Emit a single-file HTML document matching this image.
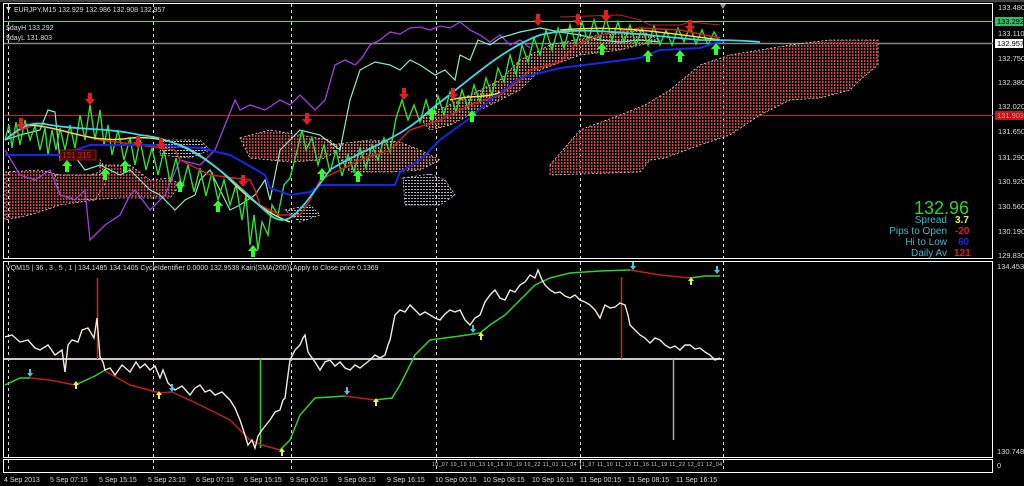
<!DOCTYPE html>
<html><head><meta charset="utf-8"><style>
html,body{margin:0;padding:0;background:#000;}
svg{display:block;font-family:"Liberation Sans",sans-serif;}
</style></head><body>
<svg width="1024" height="486" viewBox="0 0 1024 486" xmlns="http://www.w3.org/2000/svg">
<defs>
<pattern id="rd" width="3" height="3" patternUnits="userSpaceOnUse"><rect x="0" y="0" width="1" height="2" fill="#d84848"/><rect x="1" y="0" width="1" height="2" fill="#702020"/></pattern>
<pattern id="od" width="3" height="3" patternUnits="userSpaceOnUse"><rect x="0" y="0" width="1" height="2" fill="#e08060"/><rect x="1" y="0" width="1" height="2" fill="#703828"/></pattern>
<pattern id="wd" width="3" height="3" patternUnits="userSpaceOnUse"><rect x="0" y="0" width="2" height="1" fill="#b8b0c0"/></pattern>
</defs>
<rect width="1024" height="486" fill="#000"/>
<rect x="3.5" y="3.5" width="989" height="255" fill="none" stroke="#fff"/>
<rect x="3.5" y="261.5" width="989" height="196" fill="none" stroke="#fff"/>
<rect x="3.5" y="459.5" width="989" height="13" fill="none" stroke="#fff"/>
<line x1="0" y1="1" x2="1024" y2="1" stroke="#888"/>
<g stroke="#ddd" stroke-dasharray="3,3" stroke-width="1">
<line x1="8.5" y1="4" x2="8.5" y2="472"/><line x1="153.5" y1="4" x2="153.5" y2="472"/><line x1="291.5" y1="4" x2="291.5" y2="472"/><line x1="436.5" y1="4" x2="436.5" y2="472"/><line x1="580.5" y1="4" x2="580.5" y2="472"/><line x1="723.5" y1="4" x2="723.5" y2="472"/>
</g>
<polygon points="720,4 726,4 723,9" fill="#999"/>
<line x1="4" y1="21.5" x2="993" y2="21.5" stroke="#5fcf7f"/>
<line x1="4" y1="43.5" x2="993" y2="43.5" stroke="#888" stroke-width="1.5"/>
<line x1="4" y1="115.5" x2="993" y2="115.5" stroke="#d02020"/>
<g stroke="#ddd" stroke-dasharray="2,2" stroke-width="0.8">
<polygon points="550,165 580,130 620,115 645,105 670,90 700,65 730,55 760,50 790,45 830,40 878,40 878,65 860,80 850,90 820,98 790,100 760,115 730,135 700,145 665,158 650,160 640,172 550,175" fill="url(#rd)"/>
<polygon points="5,172 40,170 60,175 90,175 100,172 100,160 110,175 95,200 60,205 30,215 5,220" fill="url(#rd)"/>
<polygon points="55,175 100,175 100,165 130,165 150,180 170,178 180,185 170,198 120,198 80,200 60,195" fill="url(#rd)"/>
<polygon points="240,138 270,130 300,135 330,140 340,150 320,160 290,162 250,158" fill="url(#rd)"/>
<polygon points="330,145 370,140 400,142 420,150 440,160 420,170 390,172 350,172" fill="url(#od)"/>
<polygon points="420,118 460,100 500,80 520,60 550,45 600,35 640,30 660,40 620,50 580,55 540,70 520,90 480,110 450,125 430,130" fill="url(#od)"/>
<polygon points="403,178 430,174 445,180 455,195 440,205 405,205" fill="url(#wd)"/>
<polygon points="160,140 200,140 210,150 190,158 160,155" fill="url(#wd)"/>
<polygon points="285,210 310,205 320,215 300,222" fill="url(#wd)"/>
</g>
<polyline fill="none" stroke="#a040e0" stroke-width="1.3" points="5,150 20,175 35,180 50,170 60,195 75,200 85,190 90,240 95,235 105,225 120,215 130,195 135,190 150,210 165,195 180,160 200,165 215,150 235,100 240,110 250,105 265,110 280,100 290,105 300,95 315,110 325,100 335,65 345,60 355,65 362,58 370,45 380,40 390,32 400,34 410,28 420,27 430,30 440,26 450,28 460,22 470,30 480,35 490,42 500,35 510,45 520,40 530,48"/>
<polyline fill="none" stroke="#90e8c8" stroke-width="1.2" points="5,140 20,135 40,130 48,110 55,112 60,160 70,150 85,170 100,165 120,175 130,170 140,180 150,190 160,195 175,210 185,200 195,195 200,180 210,170 220,190 230,210 240,205 255,195 265,180 270,200 280,150 290,140 300,130 320,135 340,150 350,100 360,70 375,62 390,65 400,70 410,60 420,65 435,75 445,70 455,80 460,55 470,60 478,40 490,45 500,38 520,32 540,28 560,32 580,35 600,40 620,42 640,40 660,42"/>
<polyline fill="none" stroke="#30e030" stroke-width="1.4" points="5,140 9,125 12,148 16,122 20,145 25,120 30,140 35,126 40,150 45,128 48,155 52,130 56,150 60,128 65,150 70,125 75,148 80,115 85,140 90,105 95,140 100,110 104,145 108,125 112,155 118,130 124,160 130,138 135,165 140,140 146,170 152,148 158,175 164,150 170,182 176,158 182,188 188,165 194,192 200,168 206,196 212,172 218,200 224,180 230,205 236,185 242,220 246,195 250,245 254,215 258,250 262,222 268,235 272,205 278,215 284,185 290,178 296,155 302,130 306,150 312,138 318,165 324,145 330,172 336,150 342,176 348,155 354,172 360,148 366,168 372,145 378,160 384,138 390,152 396,118 402,100 408,120 414,105 420,122 426,100 432,120 438,96 444,115 450,92 456,112 462,90 468,108 474,85 480,102 486,78 492,95 498,68 504,82 510,55 516,75 522,45 528,62 534,38 540,55 546,30 552,50 558,28 564,48 570,25 576,45 582,22 588,42 594,20 600,40 606,18 612,40 618,22 624,42 630,25 636,45 642,28 648,45 654,26 660,45 666,30 672,45 678,28 684,42 690,26 696,44 702,30 708,45 714,32 720,42"/>
<polyline fill="none" stroke="#d02020" stroke-width="1.5" points="5,140 20,130 35,125 60,130 100,140 140,145 175,150 180,160 210,175 250,180 255,190 260,205 280,215 300,215 310,200 320,180 340,170 360,160 390,150 400,140 410,130 440,120 470,105 500,95 520,80 530,70 560,62 575,45 600,35 640,28 680,30 720,38"/>
<polyline fill="none" stroke="#c02020" stroke-width="1" points="560,17 620,15 640,20 650,25 680,25 690,22 720,25"/>
<polyline fill="none" stroke="#1428e8" stroke-width="2" points="5,155 60,155 90,145 150,145 200,148 230,155 248,165 265,175 270,188 290,195 310,192 320,185 395,185 400,172 420,160 440,140 470,118 490,100 520,78 560,68 600,63 640,58 660,50 700,48 725,40"/>
<path fill="none" stroke="#f0e040" stroke-width="1.5" d="M25,125 C60,125 90,145 130,138 C170,135 200,150 230,180 C250,200 270,215 290,222 M450,100 C470,95 490,98 500,92 M560,30 C620,25 660,32 720,40"/>
<path fill="none" stroke="#40d8e8" stroke-width="1.8" d="M5,140 C20,128 30,120 50,125 C80,130 110,128 140,135 C200,140 240,190 270,215 C290,230 300,210 330,170 C360,150 400,140 430,110 C470,80 500,50 540,35 C580,25 640,35 700,40 C720,40 740,40 760,42"/>
<g fill="#e02020">
<path d="M88,93 h4 v6 h3 l-5,6 l-5,-6 h3z"/><path d="M19,118 h4 v6 h3 l-5,6 l-5,-6 h3z"/><path d="M305,113 h4 v6 h3 l-5,6 l-5,-6 h3z"/><path d="M402,88 h4 v6 h3 l-5,6 l-5,-6 h3z"/><path d="M451,88 h4 v6 h3 l-5,6 l-5,-6 h3z"/><path d="M536,14 h4 v6 h3 l-5,6 l-5,-6 h3z"/><path d="M576,14 h4 v6 h3 l-5,6 l-5,-6 h3z"/><path d="M604,10 h4 v6 h3 l-5,6 l-5,-6 h3z"/><path d="M688,20 h4 v6 h3 l-5,6 l-5,-6 h3z"/><path d="M241,175 h4 v6 h3 l-5,6 l-5,-6 h3z"/><path d="M159,138 h4 v6 h3 l-5,6 l-5,-6 h3z"/><path d="M136,136 h4 v6 h3 l-5,6 l-5,-6 h3z"/>
</g>
<g fill="#30ff30">
<path d="M65,172 h4 v-6 h3 l-5,-6 l-5,6 h3z"/><path d="M123,172 h4 v-6 h3 l-5,-6 l-5,6 h3z"/><path d="M103,180 h4 v-6 h3 l-5,-6 l-5,6 h3z"/><path d="M178,192 h4 v-6 h3 l-5,-6 l-5,6 h3z"/><path d="M216,212 h4 v-6 h3 l-5,-6 l-5,6 h3z"/><path d="M251,257 h4 v-6 h3 l-5,-6 l-5,6 h3z"/><path d="M320,180 h4 v-6 h3 l-5,-6 l-5,6 h3z"/><path d="M356,182 h4 v-6 h3 l-5,-6 l-5,6 h3z"/><path d="M430,120 h4 v-6 h3 l-5,-6 l-5,6 h3z"/><path d="M470,122 h4 v-6 h3 l-5,-6 l-5,6 h3z"/><path d="M600,55 h4 v-6 h3 l-5,-6 l-5,6 h3z"/><path d="M646,62 h4 v-6 h3 l-5,-6 l-5,6 h3z"/><path d="M678,62 h4 v-6 h3 l-5,-6 l-5,6 h3z"/><path d="M714,55 h4 v-6 h3 l-5,-6 l-5,6 h3z"/>
</g>
<rect x="60" y="150" width="36" height="10" fill="#400" stroke="#a02020" stroke-width="0.8"/>
<text x="62" y="158" font-size="8" fill="#c03030">131.315</text>
<g font-size="7" fill="#ddd">
<path d="M6,7 h5 l-2.5,4z" fill="#ddd"/>
<text x="14" y="12">EURJPY,M15  132.929 132.986 132.908 132.957</text>
<text x="6" y="30">$dayH 133.292</text>
<text x="6" y="40">$dayL 131.803</text>
<text x="6" y="270">VQM15 | 36 , 3 , 5 , 1 | 134.1485 134.1405 CycleIdentifier 0.0000 132.9538 Kairi(SMA(200)) Apply to Close price 0.1369</text>
</g>
<text x="969" y="214" font-size="18" fill="#30d030" text-anchor="end">132.96</text>
<g font-size="10" fill="#40b8c8" text-anchor="end">
<text x="947" y="223">Spread</text><text x="947" y="234">Pips to Open</text><text x="947" y="245">Hi to Low</text><text x="947" y="256">Daily Av</text>
</g>
<g font-size="10" font-weight="bold">
<text x="955" y="223" fill="#f0f040">3.7</text><text x="955" y="234" fill="#e02020">-20</text><text x="958" y="245" fill="#2020e0">60</text><text x="954" y="256" fill="#d02020">121</text>
</g>
<g font-size="7.5" fill="#ddd">
<text x="998" y="10">133.480</text><text x="998" y="36">133.110</text><text x="998" y="61">132.750</text><text x="998" y="85">132.380</text><text x="998" y="109">132.020</text><text x="998" y="134">131.650</text><text x="998" y="160">131.290</text><text x="998" y="184">130.920</text><text x="998" y="209">130.560</text><text x="998" y="234">130.190</text><text x="998" y="258">129.830</text>
<text x="997" y="269">134.4536</text><text x="997" y="454">130.7484</text><text x="997" y="468">0</text>
</g>
<rect x="995" y="17" width="28" height="9" fill="#30c060"/><text x="997" y="24" font-size="7.5" fill="#000">133.292</text>
<rect x="995" y="39" width="28" height="9" fill="#fff"/><text x="997" y="46" font-size="7.5" fill="#000">132.957</text>
<rect x="995" y="111" width="28" height="9" fill="#c01818"/><text x="997" y="118" font-size="7.5" fill="#e88">131.903</text>
<line x1="4" y1="359" x2="722" y2="359" stroke="#c8c8c8" stroke-width="2"/>
<line x1="97.5" y1="278" x2="97.5" y2="359" stroke="#e02020" stroke-width="1.5"/>
<line x1="260.5" y1="359" x2="260.5" y2="448" stroke="#30d030" stroke-width="1.5"/>
<line x1="621.5" y1="277" x2="621.5" y2="359" stroke="#e02020" stroke-width="1.5"/>
<line x1="673.5" y1="359" x2="673.5" y2="440" stroke="#aaa" stroke-width="1.5"/>
<polyline fill="none" stroke="#30d030" stroke-width="1.5" points="5,385 20,378 30,378"/>
<polyline fill="none" stroke="#c02020" stroke-width="1.5" points="30,378 50,380 75,385"/>
<polyline fill="none" stroke="#30d030" stroke-width="1.5" points="75,385 95,376 105,370"/>
<polyline fill="none" stroke="#c02020" stroke-width="1.5" points="105,371 130,385 160,393 172,392"/>
<polyline fill="none" stroke="#c02020" stroke-width="1.5" points="172,392 200,405 230,420 250,440 262,445 280,450"/>
<polyline fill="none" stroke="#30d030" stroke-width="1.5" points="280,450 290,440 300,415 315,398 345,396"/>
<polyline fill="none" stroke="#c02020" stroke-width="1.5" points="345,396 375,400"/>
<polyline fill="none" stroke="#30d030" stroke-width="1.5" points="375,400 392,398 400,385 415,355 430,340 460,336 480,333 490,325 505,315 520,300 535,285 550,278 570,273 600,271 630,270"/>
<polyline fill="none" stroke="#c02020" stroke-width="1.5" points="630,270 660,275 690,278"/>
<polyline fill="none" stroke="#30d030" stroke-width="1.5" points="690,278 705,276 720,276"/>
<polyline fill="none" stroke="#f4ecd8" stroke-width="1.4" points="5,337 12,335 20,342 28,340 35,348 40,350 48,345 55,355 62,350 65,372 68,345 72,340 78,342 82,330 88,328 94,338 97,318 100,357 103,362 105,370 110,368 115,375 122,365 130,372 136,362 140,368 145,364 150,370 155,366 160,378 163,370 168,383 175,390 182,386 190,395 195,388 200,385 205,392 210,390 215,395 222,392 230,400 235,408 240,420 244,432 248,445 252,440 255,448 258,436 262,430 266,425 270,420 275,412 280,410 283,400 285,398 288,375 290,360 295,350 300,345 303,338 305,335 308,352 310,355 315,362 320,370 325,362 330,360 335,366 340,362 345,368 350,370 355,365 360,368 365,364 370,360 375,355 380,358 385,355 388,345 390,340 393,325 395,315 400,310 405,312 410,305 415,310 420,315 425,312 430,315 435,318 440,320 445,314 450,310 455,312 460,310 465,320 470,325 475,318 480,315 485,302 490,295 495,290 500,298 505,300 510,290 515,292 520,285 525,282 530,275 535,278 538,270 542,280 545,285 550,290 555,293 560,292 565,296 570,298 575,295 580,300 585,302 590,305 595,310 600,318 603,310 605,305 610,308 615,307 620,303 625,305 628,315 630,325 635,330 640,335 645,338 650,343 655,338 660,340 665,345 670,348 675,346 680,350 685,345 690,345 695,349 700,348 705,352 710,355 715,360 720,358"/>
<g fill="#f0f040"><path d="M73,385 l3,-4 l3,4 h-2 v4 h-2 v-4z"/><path d="M156,395 l3,-4 l3,4 h-2 v4 h-2 v-4z"/><path d="M279,452 l3,-4 l3,4 h-2 v4 h-2 v-4z"/><path d="M373,402 l3,-4 l3,4 h-2 v4 h-2 v-4z"/><path d="M478,336 l3,-4 l3,4 h-2 v4 h-2 v-4z"/><path d="M688,281 l3,-4 l3,4 h-2 v4 h-2 v-4z"/></g>
<g fill="#40c8e8"><path d="M27,373 l3,4 l3,-4 h-2 v-4 h-2 v4z"/><path d="M344,391 l3,4 l3,-4 h-2 v-4 h-2 v4z"/><path d="M470,329 l3,4 l3,-4 h-2 v-4 h-2 v4z"/><path d="M630,266 l3,4 l3,-4 h-2 v-4 h-2 v4z"/><path d="M714,270 l3,4 l3,-4 h-2 v-4 h-2 v4z"/><path d="M169,388 l3,4 l3,-4 h-2 v-4 h-2 v4z"/></g>
<text x="432" y="466" font-size="5" fill="#ddd" textLength="290">10_07 10_10 10_13 10_16 10_19 10_22 11_01 11_04 11_07 11_10 11_13 11_16 11_19 11_22 12_01 12_04</text>
<g font-size="7" fill="#ddd">
<text x="4" y="482">4 Sep 2013</text><text x="50" y="482">5 Sep 07:15</text><text x="99" y="482">5 Sep 15:15</text><text x="148" y="482">5 Sep 23:15</text><text x="196" y="482">6 Sep 07:15</text><text x="244" y="482">6 Sep 15:15</text><text x="290" y="482">9 Sep 00:15</text><text x="338" y="482">9 Sep 08:15</text><text x="387" y="482">9 Sep 16:15</text><text x="435" y="482">10 Sep 00:15</text><text x="483" y="482">10 Sep 08:15</text><text x="532" y="482">10 Sep 16:15</text><text x="580" y="482">11 Sep 00:15</text><text x="628" y="482">11 Sep 08:15</text><text x="676" y="482">11 Sep 16:15</text>
</g>
</svg>
</body></html>
